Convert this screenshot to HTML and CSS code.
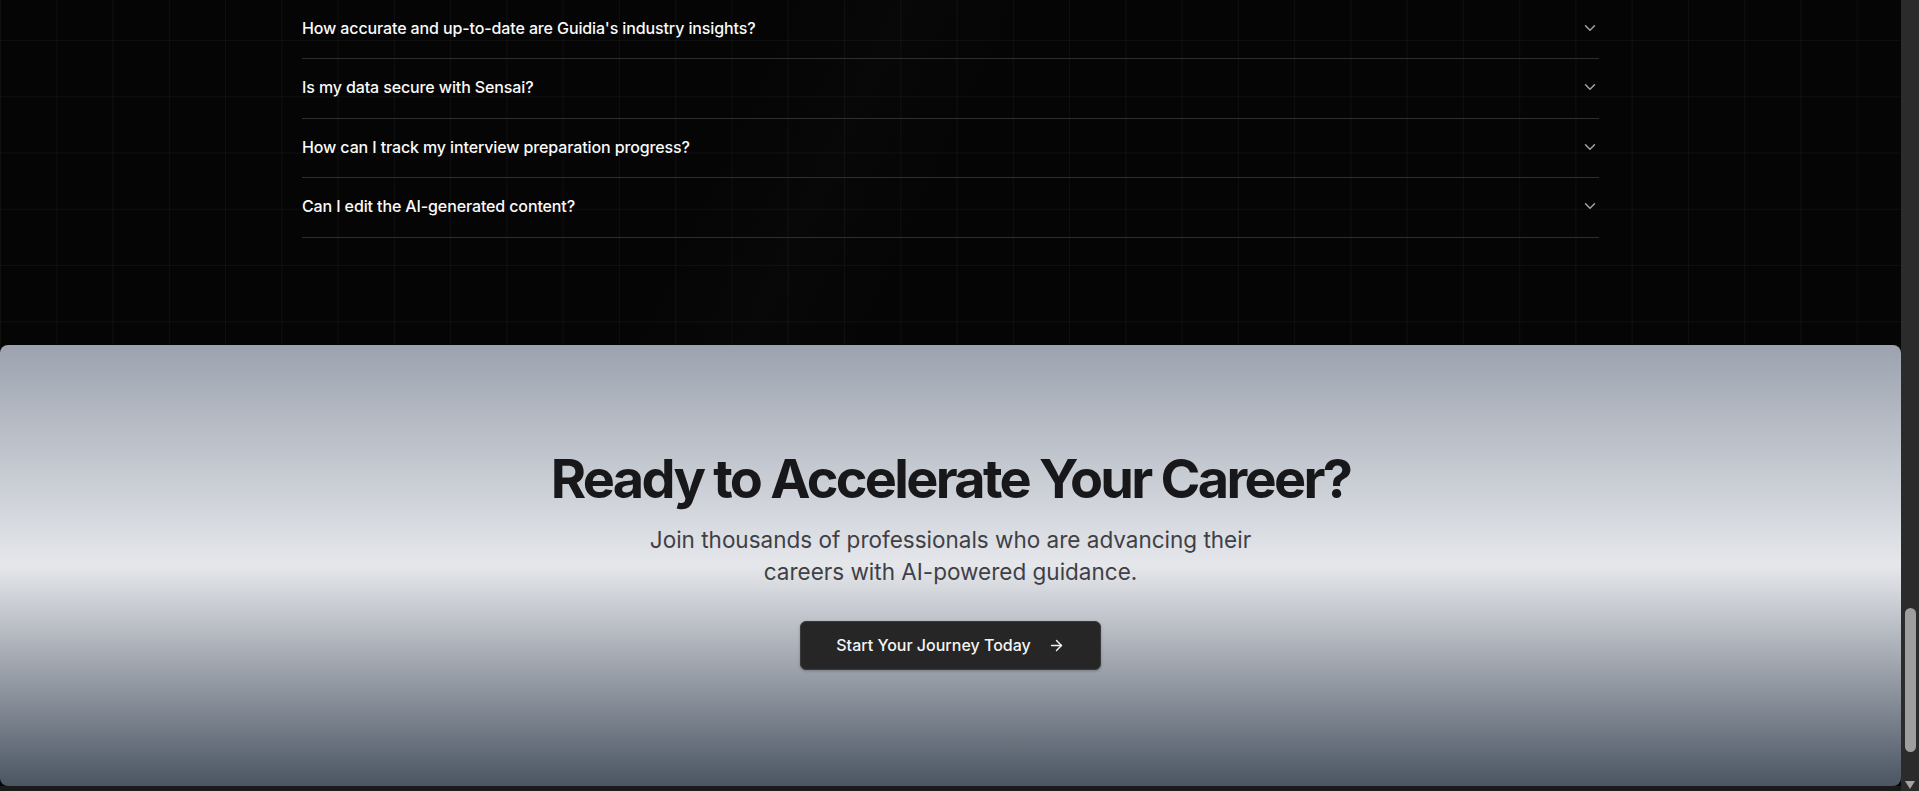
FILE: index.html
```html
<!DOCTYPE html>
<html lang="en">
<head>
<meta charset="utf-8">
<title>Sensai — FAQ &amp; CTA</title>
<link rel="stylesheet" href="styles.css">
</head>
<body>
<div class="app">
  <div class="page">
    <section class="faq">
      <div class="faq-list">
        <div class="faq-item">
          <span class="faq-q">How accurate and up-to-date are Guidia's industry insights?</span>
          <svg class="chev" viewBox="0 0 24 24" fill="none" stroke="currentColor" stroke-width="2" stroke-linecap="round" stroke-linejoin="round"><path d="m6 9 6 6 6-6"/></svg>
        </div>
        <div class="faq-item">
          <span class="faq-q">Is my data secure with Sensai?</span>
          <svg class="chev" viewBox="0 0 24 24" fill="none" stroke="currentColor" stroke-width="2" stroke-linecap="round" stroke-linejoin="round"><path d="m6 9 6 6 6-6"/></svg>
        </div>
        <div class="faq-item">
          <span class="faq-q">How can I track my interview preparation progress?</span>
          <svg class="chev" viewBox="0 0 24 24" fill="none" stroke="currentColor" stroke-width="2" stroke-linecap="round" stroke-linejoin="round"><path d="m6 9 6 6 6-6"/></svg>
        </div>
        <div class="faq-item">
          <span class="faq-q">Can I edit the AI-generated content?</span>
          <svg class="chev" viewBox="0 0 24 24" fill="none" stroke="currentColor" stroke-width="2" stroke-linecap="round" stroke-linejoin="round"><path d="m6 9 6 6 6-6"/></svg>
        </div>
      </div>
    </section>
    <section class="cta-wrap">
      <div class="cta">
        <h2 class="cta-title">Ready to Accelerate Your Career?</h2>
        <p class="cta-text">Join thousands of professionals who are advancing their careers with AI-powered guidance.</p>
        <a class="cta-btn" href="#">
          <span>Start Your Journey Today</span>
          <svg class="arrow" viewBox="0 0 24 24" fill="none" stroke="currentColor" stroke-width="2" stroke-linecap="round" stroke-linejoin="round"><path d="M5 12h14"/><path d="m12 5 7 7-7 7"/></svg>
        </a>
      </div>
    </section>
    <footer class="footer"></footer>
  </div>
  <div class="scrollbar">
    <div class="thumb"></div>
    <div class="down-arrow"></div>
  </div>
</div>
</body>
</html>
```
FILE: styles.css
```css
html, body {
  margin: 0;
  padding: 0;
  height: 100%;
  overflow: hidden;
  background: #050505;
  font-family: Inter, "Liberation Sans", sans-serif;
}

.app {
  display: flex;
  height: 791px;
}

.page {
  flex: 1;
  display: flex;
  flex-direction: column;
  background: #040404;
  min-width: 0;
}

.faq {
  height: 345px;
  flex: none;
  background-color: #050505;
  background-image:
    linear-gradient(115deg, transparent 38%, rgba(255,255,255,0.012) 44%, transparent 50%),
    linear-gradient(to right, rgba(255,255,255,0.04) 1px, transparent 1px),
    linear-gradient(to bottom, rgba(255,255,255,0.04) 1px, transparent 1px);
  background-size: 100% 100%, 56.27px 56.27px, 56.27px 56.27px;
  background-position: 0 0, 0 40px, 0 40px;
}

.faq-list {
  max-width: 1297px;
  margin: 0 auto;
}

.faq-item {
  display: flex;
  align-items: center;
  justify-content: space-between;
  padding: 16px 0 18.4px;
  border-bottom: 1px solid #2e2e2e;
}

.faq-q {
  color: #fafafa;
  font-size: 16px;
  line-height: 24px;
  font-weight: 500;
  letter-spacing: -0.12px;
}

.chev {
  width: 18px;
  height: 18px;
  color: #a3a3a3;
  flex: none;
}

.cta-wrap {
  flex: none;
  background: #050505;
}

.cta {
  height: 441px;
  box-sizing: border-box;
  padding-top: 105.6px;
  border-radius: 8px;
  background: linear-gradient(to bottom, #9ca3af 0%, #e5e7eb 50%, #4b5563 100%);
  display: flex;
  flex-direction: column;
  align-items: center;
  text-align: center;
}

.cta-title {
  margin: 0;
  font-size: 54px;
  line-height: 56px;
  font-weight: 700;
  letter-spacing: -0.05em;
  color: #18181b;
}

.cta-text {
  margin: 17.4px 0 0;
  max-width: 650px;
  font-size: 22.5px;
  line-height: 32px;
  color: #3f3f46;
}

.cta-btn {
  margin-top: 32.7px;
  height: 49px;
  box-sizing: border-box;
  padding: 0 35px 0 35px;
  display: flex;
  align-items: center;
  gap: 17px;
  background: #262626;
  border: 1px solid #3a3a3a;
  border-radius: 6px;
  box-shadow: 0 1px 3px rgba(0,0,0,0.25);
  color: #f5f5f5;
  font-size: 16px;
  font-weight: 500;
  text-decoration: none;
}

.arrow {
  width: 17px;
  height: 17px;
  flex: none;
}

.footer {
  flex: 1;
  background: #1a1a1a;
}

.scrollbar {
  width: 18px;
  flex: none;
  background: #2b2b2b;
  display: flex;
  flex-direction: column;
  align-items: center;
  justify-content: flex-end;
}

.thumb {
  width: 11px;
  height: 144px;
  border-radius: 6px;
  background: #9e9e9e;
  margin-bottom: 29px;
}

.down-arrow {
  width: 0;
  height: 0;
  border-left: 5.5px solid transparent;
  border-right: 5.5px solid transparent;
  border-top: 8px solid #a3a3a3;
  margin-bottom: 2px;
}
```
